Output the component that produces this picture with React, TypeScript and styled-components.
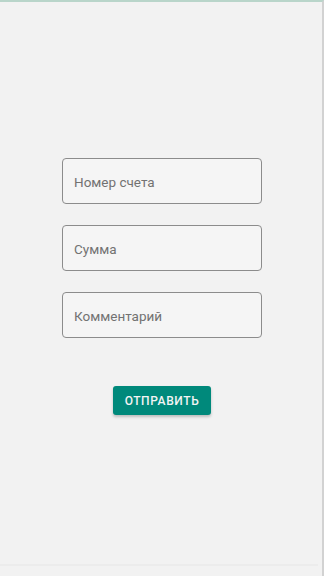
import React from "react";
import styled, { createGlobalStyle } from "styled-components";

const Global = createGlobalStyle`
  html, body { margin: 0; padding: 0; background: #f2f2f2; }
  * { box-sizing: border-box; }
`;

const Screen = styled.div`
  width: 324px;
  height: 576px;
  background: #f2f2f2;
  border-top: 2px solid #b9d5ca;
  border-right: 2px solid #d2d2d2;
  display: flex;
  flex-direction: column;
  align-items: flex-start;
  padding-top: 156px;
  padding-left: 62px;
  font-family: Roboto, "Noto Sans", sans-serif;
  position: relative;
`;

const Form = styled.form`
  display: flex;
  flex-direction: column;
  align-items: center;
  width: 200px;
  gap: 21px;
`;

const Field = styled.input`
  width: 200px;
  height: 46px;
  border: 1px solid #8c8c8c;
  border-radius: 4px;
  background: #f5f5f5;
  padding: 2px 11px 0;
  font-family: Roboto, "Noto Sans", sans-serif;
  font-size: 13.5px;
  color: #333;
  outline: none;
  &::placeholder { color: #727272; }
`;

const Submit = styled.button`
  margin-top: 27px;
  width: 98px;
  height: 29px;
  border: none;
  border-radius: 3px;
  background: #00897b;
  color: #f4f4f4;
  font-family: Roboto, "Noto Sans", sans-serif;
  font-weight: 500;
  font-size: 12px;
  letter-spacing: 0.6px;
  box-shadow: 0 2px 3px rgba(0,0,0,0.22);
  padding: 0;
`;

const BottomLine = styled.div`
  position: absolute;
  left: 0;
  right: 4px;
  top: 562px;
  height: 2px;
  background: #ececec;
`;

export default function App() {
  return (
    <>
      <Global />
      <Screen>
        <Form onSubmit={(e) => e.preventDefault()}>
          <Field placeholder="Номер счета" />
          <Field placeholder="Сумма" />
          <Field placeholder="Комментарий" />
          <Submit type="submit">ОТПРАВИТЬ</Submit>
        </Form>
        <BottomLine />
      </Screen>
    </>
  );
}
